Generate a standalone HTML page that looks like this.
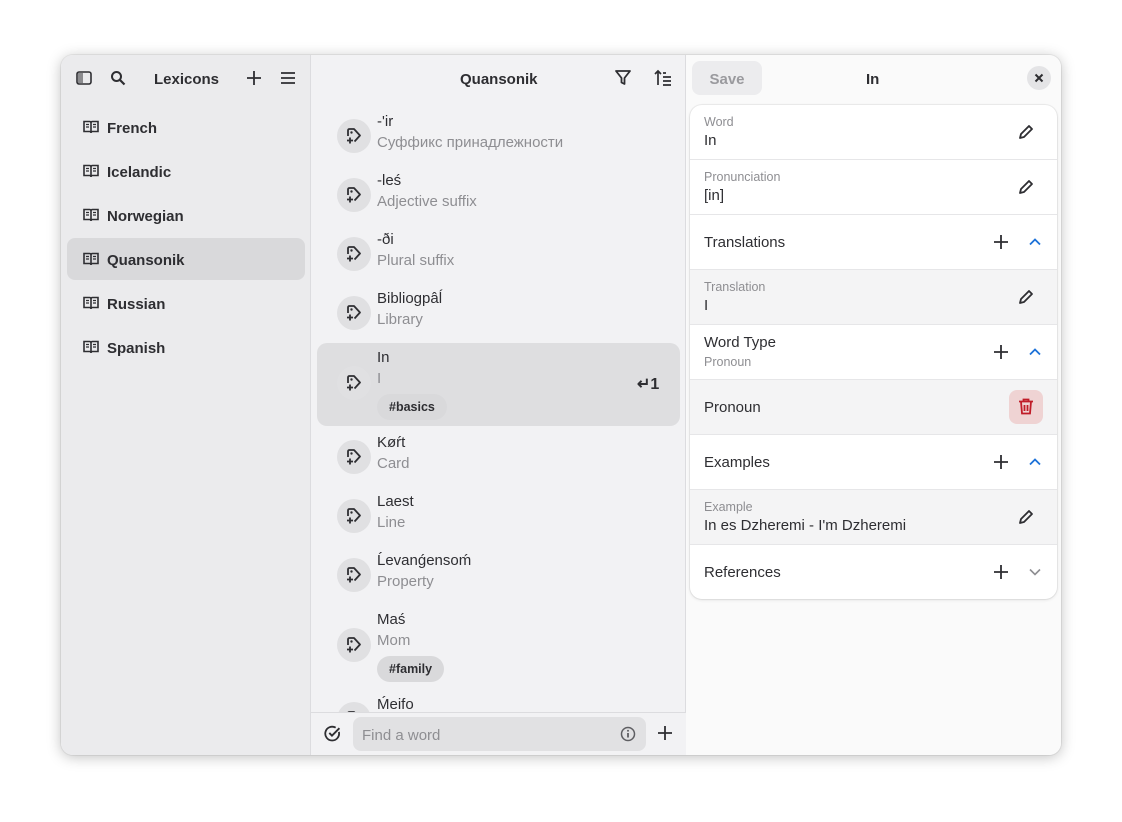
<!DOCTYPE html>
<html><head><meta charset="utf-8"><style>
*{box-sizing:border-box;margin:0;padding:0}
body{width:1122px;height:822px;background:#fff;font-family:"Liberation Sans",sans-serif;position:relative;overflow:hidden;color:#2e2e32}
.win{position:absolute;left:61px;top:55px;width:1000px;height:700px;border-radius:12px;overflow:hidden;box-shadow:0 2px 14px rgba(0,0,0,.25),0 0 0 1px rgba(0,0,0,.06);background:#fafafb}
.side{position:absolute;left:0;top:0;width:250px;height:700px;background:#ebebed;border-right:1px solid #dcdcdf}
.mid{position:absolute;left:250px;top:0;width:375px;height:700px;background:#f2f2f4;border-right:1px solid #dcdcdf}
.right{position:absolute;left:625px;top:0;width:375px;height:700px;background:#fafafa}
.a{position:absolute}
.hb{font-weight:bold;font-size:15px;color:#2e2e32}
.lex{position:absolute;left:6px;width:238px;height:42px;border-radius:8px;font-weight:bold;font-size:15px;line-height:46px;padding-left:40px}
.lex svg{position:absolute;left:16px;top:13px}
.item{position:absolute;left:6px;width:363px;border-radius:10px}
.ic{position:absolute;left:20px;width:34px;height:34px;border-radius:50%;background:#e0e0e2}
.ic svg{position:absolute;left:8px;top:8px}
.t1{position:absolute;left:60px;font-size:15px;color:#2e2e32}
.t2{position:absolute;left:60px;font-size:15px;color:#8e8e92}
.tag{position:absolute;left:60px;height:26px;border-radius:13px;background:#d9d9db;font-size:12.5px;font-weight:bold;padding:0 12px;line-height:27px;color:#2e2e32}
.card{position:absolute;left:4px;top:50px;width:367px;height:494px;background:#fff;border-radius:12px;box-shadow:0 0 0 1px rgba(0,0,0,.05),0 1px 3px rgba(0,0,0,.1);overflow:hidden}
.row{position:absolute;left:0;width:367px;height:55px;border-bottom:1px solid #e6e6e8}
.g{background:#f4f4f5}
.lab{position:absolute;left:14px;font-size:12.5px;color:#8e8e92}
.val{position:absolute;left:14px;font-size:15px;color:#2e2e32}
</style></head><body>
<div class="win">
<div class="side">
 <svg class="a" style="left:15px;top:15px" width="16" height="16" viewBox="0 0 16 16"><rect x="1" y="2" width="14" height="12" rx="2" fill="none" stroke="#2e2e32" stroke-width="1.6"/><rect x="2" y="3" width="5" height="10" fill="#2e2e32" opacity=".5"/></svg>
 <svg class="a" style="left:49px;top:15px" width="16" height="16" viewBox="0 0 16 16"><circle cx="6.5" cy="6.5" r="4.5" fill="none" stroke="#2e2e32" stroke-width="2"/><path d="M10 10l4.5 4.5" stroke="#2e2e32" stroke-width="2.2"/></svg>
 <div class="a hb" style="left:93px;top:16px">Lexicons</div>
 <svg class="a" style="left:185px;top:15px" width="16" height="16" viewBox="0 0 16 16"><path d="M8 1v14M1 8h14" stroke="#2e2e32" stroke-width="1.8"/></svg>
 <svg class="a" style="left:219px;top:15px" width="16" height="16" viewBox="0 0 16 16"><path d="M1 3h14M1 8h14M1 13h14" stroke="#2e2e32" stroke-width="1.8"/></svg>
 <div class="lex" style="top:51px">French</div>
 <div class="lex" style="top:95px">Icelandic</div>
 <div class="lex" style="top:139px">Norwegian</div>
 <div class="lex" style="top:183px;background:#d9d9db">Quansonik</div>
 <div class="lex" style="top:227px">Russian</div>
 <div class="lex" style="top:271px">Spanish</div>
</div>
<div class="mid">
 <div class="a hb" style="left:149px;top:16px">Quansonik</div>
 <svg class="a" style="left:303px;top:14px" width="18" height="18" viewBox="0 0 18 18"><path d="M2 2h14l-5.5 7v6l-3 -1.5V9z" fill="none" stroke="#2e2e32" stroke-width="1.8" stroke-linejoin="round"/></svg>
 <svg class="a" style="left:343px;top:14px" width="18" height="18" viewBox="0 0 18 18"><path d="M4 16V2M1 5l3-3 3 3M9 8h8M9 12h8M9 16h8M9 4h3" stroke="#2e2e32" stroke-width="1.7" fill="none"/></svg>
 <div id="list"></div>
 <div class="a" style="left:0;top:657px;width:375px;height:43px;background:#f2f2f4;border-top:1px solid #dcdcdf">
  <svg class="a" style="left:13px;top:12px" width="17" height="17" viewBox="0 0 16 16"><path d="M14 6.5A6.5 6.5 0 1 1 11 2.5" fill="none" stroke="#2e2e32" stroke-width="1.7"/><path d="M5 7.5l2.5 2.5 7-7" fill="none" stroke="#2e2e32" stroke-width="1.8"/></svg>
  <div class="a" style="left:42px;top:4px;width:293px;height:34px;border-radius:8px;background:#e1e1e3;font-size:15px;color:#8e8e92;line-height:38px;padding-left:9px">Find a word
   <svg class="a" style="left:267px;top:9px" width="16" height="16" viewBox="0 0 16 16"><circle cx="8" cy="8" r="6.5" fill="none" stroke="#5e5e62" stroke-width="1.5"/><path d="M8 7v4.5" stroke="#5e5e62" stroke-width="1.8"/><circle cx="8" cy="4.8" r="1" fill="#5e5e62"/></svg></div>
  <svg class="a" style="left:346px;top:12px" width="16" height="16" viewBox="0 0 16 16"><path d="M8 1v14M1 8h14" stroke="#2e2e32" stroke-width="1.8"/></svg>
 </div>
</div>
<div class="right">
 <div class="a" style="left:6px;top:6px;width:70px;height:34px;border-radius:8px;background:#ececee;font-weight:bold;font-size:15px;color:#9a9a9e;text-align:center;line-height:37px">Save</div>
 <div class="a hb" style="left:180px;top:16px">In</div>
 <div class="a" style="left:341px;top:11px;width:24px;height:24px;border-radius:50%;background:#e4e4e6"><svg class="a" style="left:7px;top:7px" width="10" height="10" viewBox="0 0 10 10"><path d="M1.5 1.5l7 7M8.5 1.5l-7 7" stroke="#2e2e32" stroke-width="2"/></svg></div>
 <div class="card">
  <div class="row" style="top:0"><div class="lab" style="top:10px">Word</div><div class="val" style="top:27px">In</div></div>
  <div class="row" style="top:55px"><div class="lab" style="top:10px">Pronunciation</div><div class="val" style="top:27px">[in]</div></div>
  <div class="row" style="top:110px"><div class="val" style="top:19px">Translations</div></div>
  <div class="row g" style="top:165px"><div class="lab" style="top:10px">Translation</div><div class="val" style="top:27px">I</div></div>
  <div class="row" style="top:220px"><div class="val" style="top:9px">Word Type</div><div class="lab" style="top:30px">Pronoun</div></div>
  <div class="row g" style="top:275px"><div class="val" style="top:19px">Pronoun</div>
   <div class="a" style="left:319px;top:10px;width:34px;height:34px;border-radius:8px;background:#efd3d3"><svg class="a" style="left:9px;top:8px" width="16" height="17" viewBox="0 0 16 17"><path d="M1 3.5h14M5.5 3.5V1.5h5v2M3 3.5l1 12h8l1-12M6.5 7v6M9.5 7v6" fill="none" stroke="#c01c28" stroke-width="1.8"/></svg></div></div>
  <div class="row" style="top:330px"><div class="val" style="top:19px">Examples</div></div>
  <div class="row g" style="top:385px"><div class="lab" style="top:10px">Example</div><div class="val" style="top:27px">In es Dzheremi - I'm Dzheremi</div></div>
  <div class="row" style="top:440px;border:none"><div class="val" style="top:19px">References</div></div>
  <div id="icons"></div>
 </div>
</div>
</div>
<script>
var tagIc='<svg width="18" height="18" viewBox="0 0 18 18"><path d="M3 9V3.5Q3 2 4.5 2H9l6 6.5-5.5 6" fill="none" stroke="#2e2e32" stroke-width="1.8" stroke-linejoin="round"/><circle cx="6.5" cy="5.5" r="1.2" fill="#2e2e32"/><path d="M5 10.5v6M2 13.5h6" stroke="#2e2e32" stroke-width="1.8"/></svg>';
var items=[["-'ir","Суффикс принадлежности"],["-leś","Adjective suffix"],["-ði","Plural suffix"],["Bibliogpâĺ","Library"],["In","I","#basics",1],["Køŕt","Card"],["Laest","Line"],["Ĺevanǵensoḿ","Property"],["Maś","Mom","#family"],["Ḿeifo",""]];
var y=51,h='';
items.forEach(function(it){var ht=it[2]?85:59;
 h+='<div class="item" style="top:'+(y+1)+'px;height:'+(ht-2)+'px;'+(it[3]?'background:#dedee0':'')+'">'+
 '<div class="ic" style="top:'+(it[2]?23:12)+'px">'+tagIc+'</div>'+
 '<div class="t1" style="top:6px">'+it[0]+'</div><div class="t2" style="top:27px">'+it[1]+'</div>'+
 (it[2]?'<div class="tag" style="top:51px">'+it[2]+'</div>':'')+
 (it[3]?'<div class="a" style="left:320px;top:31px;font-size:16px;font-weight:bold">↵1</div>':'')+'</div>';
 y+=ht;});
document.getElementById('list').innerHTML=h;
var pen='<svg width="16" height="16" viewBox="0 0 16 16"><path d="M2 14l1-4 8-8 3 3-8 8z" fill="none" stroke="#2e2e32" stroke-width="1.8" stroke-linejoin="round"/></svg>';
var plus='<svg width="16" height="16" viewBox="0 0 16 16"><path d="M8 1v14M1 8h14" stroke="#2e2e32" stroke-width="1.8"/></svg>';
var up='<svg width="14" height="14" viewBox="0 0 14 14"><path d="M2 9.5l5-5 5 5" fill="none" stroke="#1c71d8" stroke-width="1.8"/></svg>';
var dn='<svg width="14" height="14" viewBox="0 0 14 14"><path d="M2 4.5l5 5 5-5" fill="none" stroke="#8e8e92" stroke-width="1.6"/></svg>';
var c='';
[0,55,165,385].forEach(function(t){c+='<div class="a" style="left:328px;top:'+(t+19)+'px">'+pen+'</div>'});
[110,220,330,440].forEach(function(t,i){c+='<div class="a" style="left:303px;top:'+(t+19)+'px">'+plus+'</div><div class="a" style="left:338px;top:'+(t+20)+'px">'+(i==3?dn:up)+'</div>'});
document.getElementById('icons').innerHTML=c;
var bk='<svg width="16" height="16" viewBox="0 0 16 16"><path d="M1 2.5h5.5Q8 2.5 8 4v10Q8 12.5 6.5 12.5H1zM15 2.5H9.5Q8 2.5 8 4v10Q8 12.5 9.5 12.5H15z" fill="none" stroke="#2e2e32" stroke-width="1.6"/><path d="M3 5.5h3M3 8h3M10 5.5h3M10 8h3" stroke="#2e2e32" stroke-width="1.3"/></svg>';
document.querySelectorAll('.lex').forEach(function(e){e.insertAdjacentHTML('afterbegin',bk)});
</script>
</body></html>
